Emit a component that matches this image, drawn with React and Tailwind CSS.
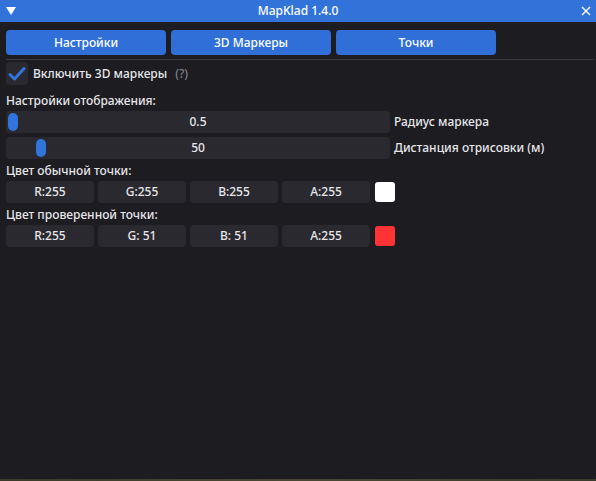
import React from "react";

const font = { fontFamily: '"Noto Sans", "DejaVu Sans", sans-serif' };

function Slider({ value, grab, label }) {
  return (
    <div className="flex items-center gap-[4px]">
      <div className="relative w-[384px] h-[22px] rounded-[4px] bg-[#2a292f] flex items-center justify-center">
        <div
          className="absolute top-[2px] w-[10px] h-[18px] rounded-[5px] bg-[#3174dc]"
          style={{ left: grab }}
        />
        <span className="relative">{value}</span>
      </div>
      <span>{label}</span>
    </div>
  );
}

function ColorRow({ values, swatch }) {
  return (
    <div className="flex items-center">
      <div className="flex gap-[4px]">
        {values.map((v) => (
          <div
            key={v}
            className="w-[88px] h-[22px] rounded-[4px] bg-[#2a292f] flex items-center justify-center"
          >
            {v}
          </div>
        ))}
      </div>
      <div className={"ml-[5px] w-[20px] h-[20px] rounded-[3px] " + swatch} />
    </div>
  );
}

export default function App() {
  const tabs = ["Настройки", "3D Маркеры", "Точки"];

  return (
    <div
      className="w-[596px] h-[481px] flex flex-col bg-[#1d1c21] text-[#e6e6ea] text-[12px] font-medium leading-[16px] overflow-hidden"
      style={font}
    >
      {/* Title bar */}
      <div className="h-[22px] shrink-0 bg-[#3173d9] flex items-center relative">
        <svg className="absolute left-[6px] top-[7px]" width="10" height="9" viewBox="0 0 10 9">
          <path d="M0 0 L10 0 L5 8 Z" fill="#ffffff" />
        </svg>
        <div className="w-full text-center text-white">MapKlad 1.4.0</div>
        <svg className="absolute right-[5px] top-[6px]" width="10" height="10" viewBox="0 0 10 10">
          <path d="M1 1 L9 9 M9 1 L1 9" stroke="#ffffff" strokeWidth="1.4" />
        </svg>
      </div>

      <div className="flex-1 flex flex-col px-[6px]">
        {/* Tabs */}
        <div className="mt-[8px] flex gap-[5px]">
          {tabs.map((t) => (
            <button
              key={t}
              className="w-[160px] h-[25px] rounded-[4px] bg-[#2f6fd7] text-white"
            >
              {t}
            </button>
          ))}
        </div>

        <div className="mt-[4px] h-px bg-[#3a3a40] mr-[-4px]" />

        {/* Checkbox */}
        <div className="mt-[2px] flex items-center gap-[5px]">
          <div className="w-[22px] h-[23px] rounded-[4px] bg-[#2a292f] flex items-center justify-center">
            <svg width="18" height="16" viewBox="0 0 18 16">
              <path
                d="M2 8.5 L6.5 13 L16 2.5"
                fill="none"
                stroke="#3375dd"
                strokeWidth="3"
                strokeLinecap="round"
                strokeLinejoin="round"
              />
            </svg>
          </div>
          <span>Включить 3D маркеры</span>
          <span className="ml-[3px] text-[#7c7c84]">(?)</span>
        </div>

        <div className="mt-[8px]">Настройки отображения:</div>
        <div className="mt-[2px]">
          <Slider value="0.5" grab="2px" label="Радиус маркера" />
        </div>
        <div className="mt-[4px]">
          <Slider value="50" grab="30px" label="Дистанция отрисовки (м)" />
        </div>

        <div className="mt-[4px]">Цвет обычной точки:</div>
        <div className="mt-[2px]">
          <ColorRow values={["R:255", "G:255", "B:255", "A:255"]} swatch="bg-white" />
        </div>

        <div className="mt-[4px]">Цвет проверенной точки:</div>
        <div className="mt-[2px]">
          <ColorRow values={["R:255", "G: 51", "B: 51", "A:255"]} swatch="bg-[#ff3333]" />
        </div>
      </div>

      {/* scenery strip under window */}
      <div className="h-[2px] shrink-0 bg-gradient-to-r from-[#3b3a2a] via-[#4a4834] to-[#3a3b2c]" />
    </div>
  );
}
